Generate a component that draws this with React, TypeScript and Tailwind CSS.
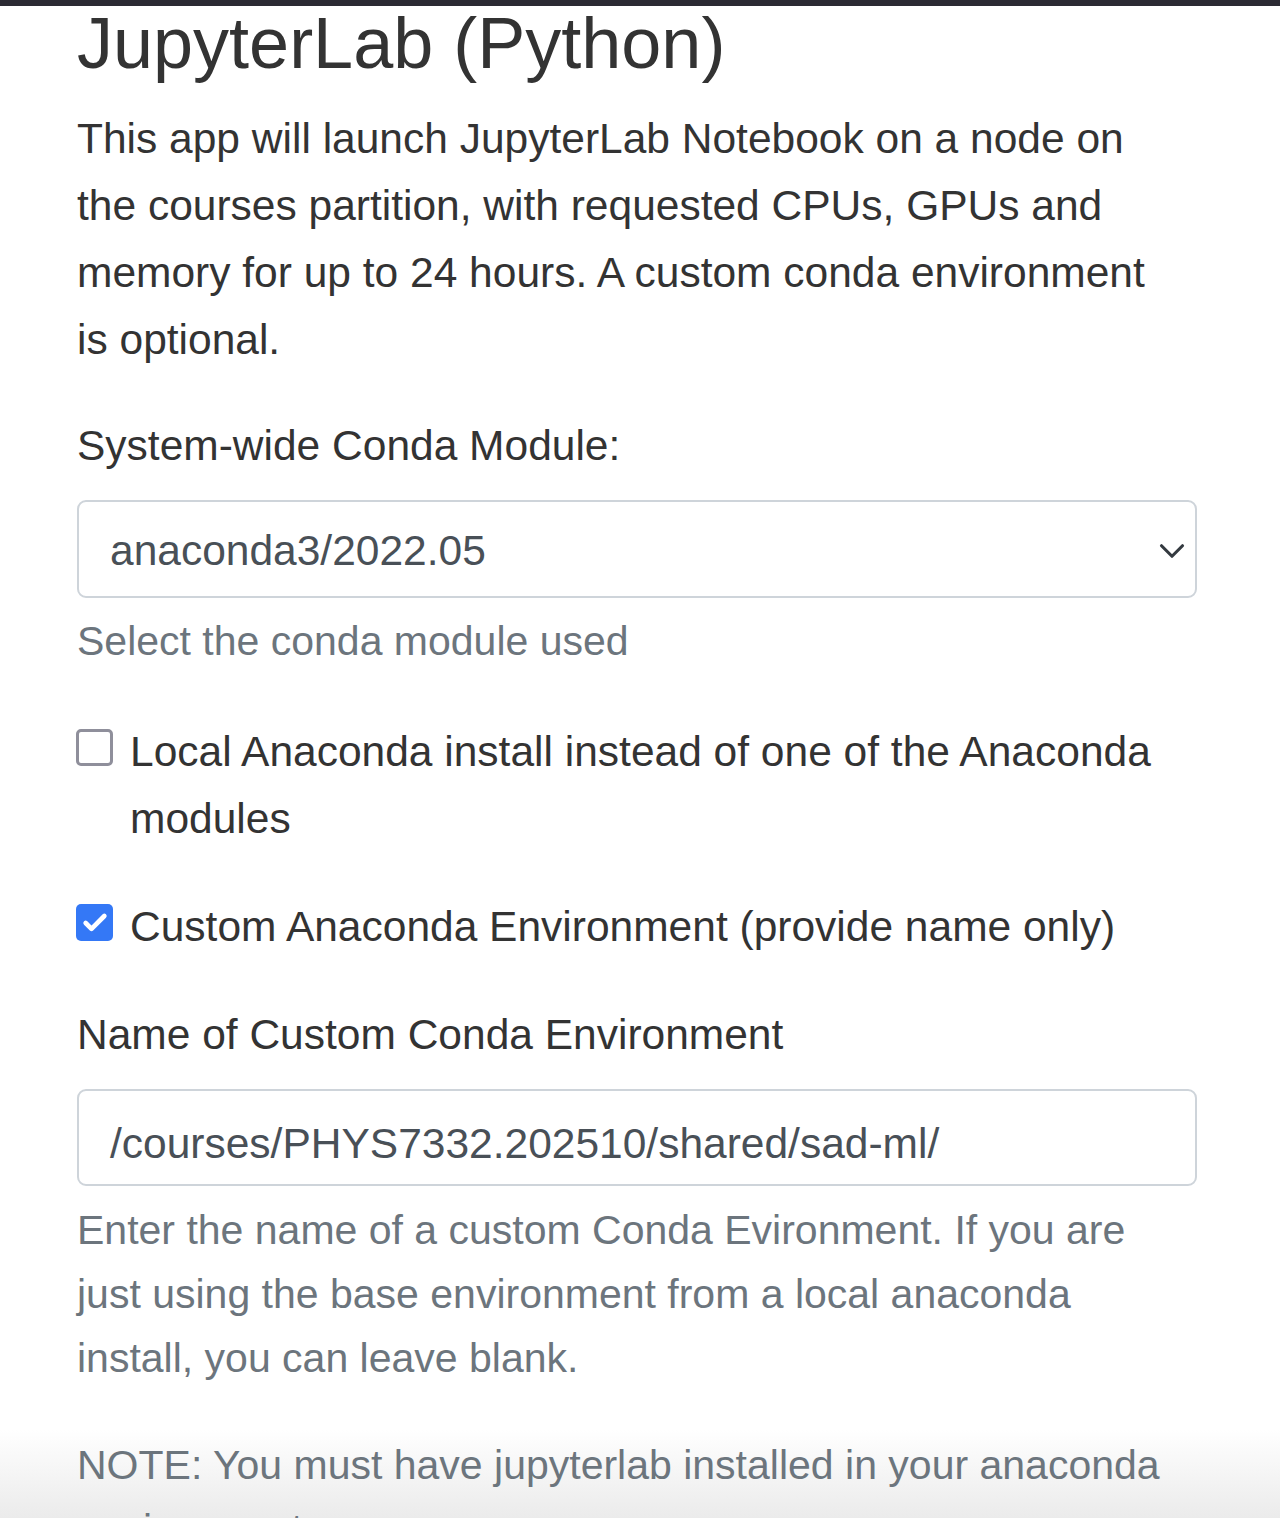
import { Check, ChevronDown } from 'lucide-react';

const font = "font-['Liberation_Sans',Arial,sans-serif]";

function Checkbox({ checked }: { checked: boolean }) {
  if (checked) {
    return (
      <span className="mt-[11px] -ml-px flex h-[37px] w-[37px] shrink-0 items-center justify-center rounded-[5px] bg-[#3478f6]">
        <Check className="h-[28px] w-[28px] text-white" strokeWidth={4} />
      </span>
    );
  }
  return (
    <span className="mt-[11px] -ml-px block h-[37px] w-[37px] shrink-0 rounded-[5px] border-[3px] border-[#8f8f9b] bg-white" />
  );
}

export default function App() {
  return (
    <div
      className={`relative h-[1518px] overflow-hidden bg-[linear-gradient(to_bottom,#ffffff_1430px,#ebebeb_1518px)] text-[#333] ${font}`}
    >
      <div className="absolute inset-x-0 top-0 z-10 h-[6px] bg-[#2b2a33]" />

      <main className="ml-[77px] w-[1120px]">
        <h1 className="mb-[19px] text-[72px] leading-[86px] font-medium">JupyterLab (Python)</h1>

        <p className="max-w-[1100px] text-[42.5px] leading-[67px]">
          This app will launch JupyterLab Notebook on a node on the courses partition, with requested CPUs,
          GPUs and memory for up to 24 hours. A custom conda environment is optional.
        </p>

        <label className="mt-[39px] block text-[42.5px] leading-[67px]">System-wide Conda Module:</label>
        <div className="relative mt-[21px] h-[98px] rounded-[9px] border-2 border-[#ced4da] pt-[15px] pl-[31px] text-[42.5px] leading-[67px] text-[#495057]">
          anaconda3/2022.05
          <ChevronDown className="absolute top-[28px] right-[2px] h-[42px] w-[42px] text-[#343a40]" strokeWidth={1.8} />
        </div>
        <p className="mt-[11px] text-[41px] leading-[64px] text-[#6c757d]">Select the conda module used</p>

        <div className="mt-[45px] flex gap-[17px]">
          <Checkbox checked={false} />
          <span className="text-[42.5px] leading-[67px]">
            Local Anaconda install instead of one of the Anaconda modules
          </span>
        </div>

        <div className="mt-[41px] flex gap-[17px]">
          <Checkbox checked />
          <span className="text-[42.5px] leading-[67px]">Custom Anaconda Environment (provide name only)</span>
        </div>

        <label className="mt-[41px] block text-[42.5px] leading-[67px]">Name of Custom Conda Environment</label>
        <div className="mt-[21px] h-[97px] rounded-[9px] border-2 border-[#ced4da] pt-[19px] pl-[31px] text-[42.5px] leading-[67px] text-[#495057]">
          /courses/PHYS7332.202510/shared/sad-ml/
        </div>
        <p className="mt-[12px] max-w-[1090px] text-[41px] leading-[64px] text-[#6c757d]">
          Enter the name of a custom Conda Evironment. If you are just using the base environment from a local
          anaconda install, you can leave blank.
        </p>

        <p className="mt-[43px] text-[41px] leading-[64px] text-[#6c757d]">
          NOTE: You must have jupyterlab installed in your anaconda environment.
        </p>
      </main>
    </div>
  );
}
